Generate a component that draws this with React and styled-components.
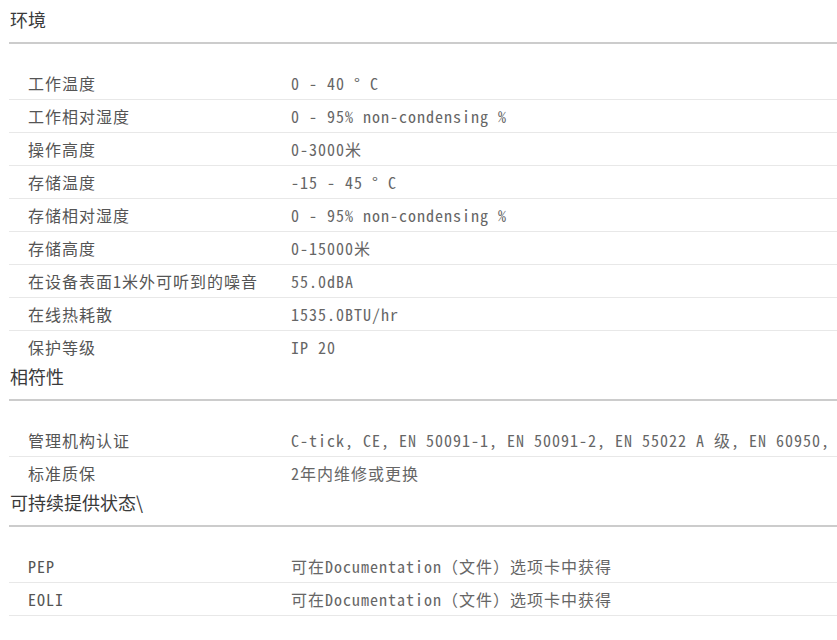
import React from 'react';
import styled, { createGlobalStyle } from 'styled-components';

const GlobalStyle = createGlobalStyle`
  html, body {
    margin: 0;
    padding: 0;
    background: #ffffff;
    overflow: hidden;
  }
`;

const Page = styled.div`
  padding: 7px 0 0 9px;
  width: 900px;
`;

const Section = styled.section`
  display: flex;
  flex-direction: column;
`;

const Heading = styled.h2`
  margin: 0;
  padding: 0 0 11px 1px;
  font-family: 'Noto Sans CJK SC', 'Noto Sans', sans-serif;
  font-weight: 400;
  font-size: 18px;
  line-height: 24px;
  color: #3a3a3a;
  border-bottom: 2px solid #cccccc;
`;

const Table = styled.div`
  display: flex;
  flex-direction: column;
  margin-top: 23px;
`;

const Row = styled.div`
  display: grid;
  grid-template-columns: 282px 1fr;
  align-items: center;
  height: 33px;
  box-sizing: border-box;
  border-bottom: 1px solid #e8e8e8;
  font-family: 'Noto Sans Mono CJK SC', 'Liberation Mono', 'Noto Sans CJK SC', monospace;
  font-size: 16px;
  font-weight: 300;
  letter-spacing: 1px;
  white-space: nowrap;

  &:last-child {
    border-bottom-color: ${({ $closed }) => ($closed ? '#e8e8e8' : 'transparent')};
  }
`;

const Label = styled.span`
  padding-left: 19px;
  color: #555555;
`;

const Value = styled.span`
  color: #666666;
`;

const sections = [
  {
    title: '环境',
    rows: [
      ['工作温度', '0 - 40 ° C'],
      ['工作相对湿度', '0 - 95% non-condensing %'],
      ['操作高度', '0-3000米'],
      ['存储温度', '-15 - 45 ° C'],
      ['存储相对湿度', '0 - 95% non-condensing %'],
      ['存储高度', '0-15000米'],
      ['在设备表面1米外可听到的噪音', '55.0dBA'],
      ['在线热耗散', '1535.0BTU/hr'],
      ['保护等级', 'IP 20'],
    ],
  },
  {
    title: '相符性',
    rows: [
      ['管理机构认证', 'C-tick, CE, EN 50091-1, EN 50091-2, EN 55022 A 级, EN 60950,'],
      ['标准质保', '2年内维修或更换'],
    ],
  },
  {
    title: '可持续提供状态\\',
    closed: true,
    rows: [
      ['PEP', '可在Documentation（文件）选项卡中获得'],
      ['EOLI', '可在Documentation（文件）选项卡中获得'],
    ],
  },
];

export default function App() {
  return (
    <>
      <GlobalStyle />
      <Page>
        {sections.map((s) => (
          <Section key={s.title}>
            <Heading>{s.title}</Heading>
            <Table>
              {s.rows.map(([label, value]) => (
                <Row key={label} $closed={s.closed}>
                  <Label>{label}</Label>
                  <Value>{value}</Value>
                </Row>
              ))}
            </Table>
          </Section>
        ))}
      </Page>
    </>
  );
}
